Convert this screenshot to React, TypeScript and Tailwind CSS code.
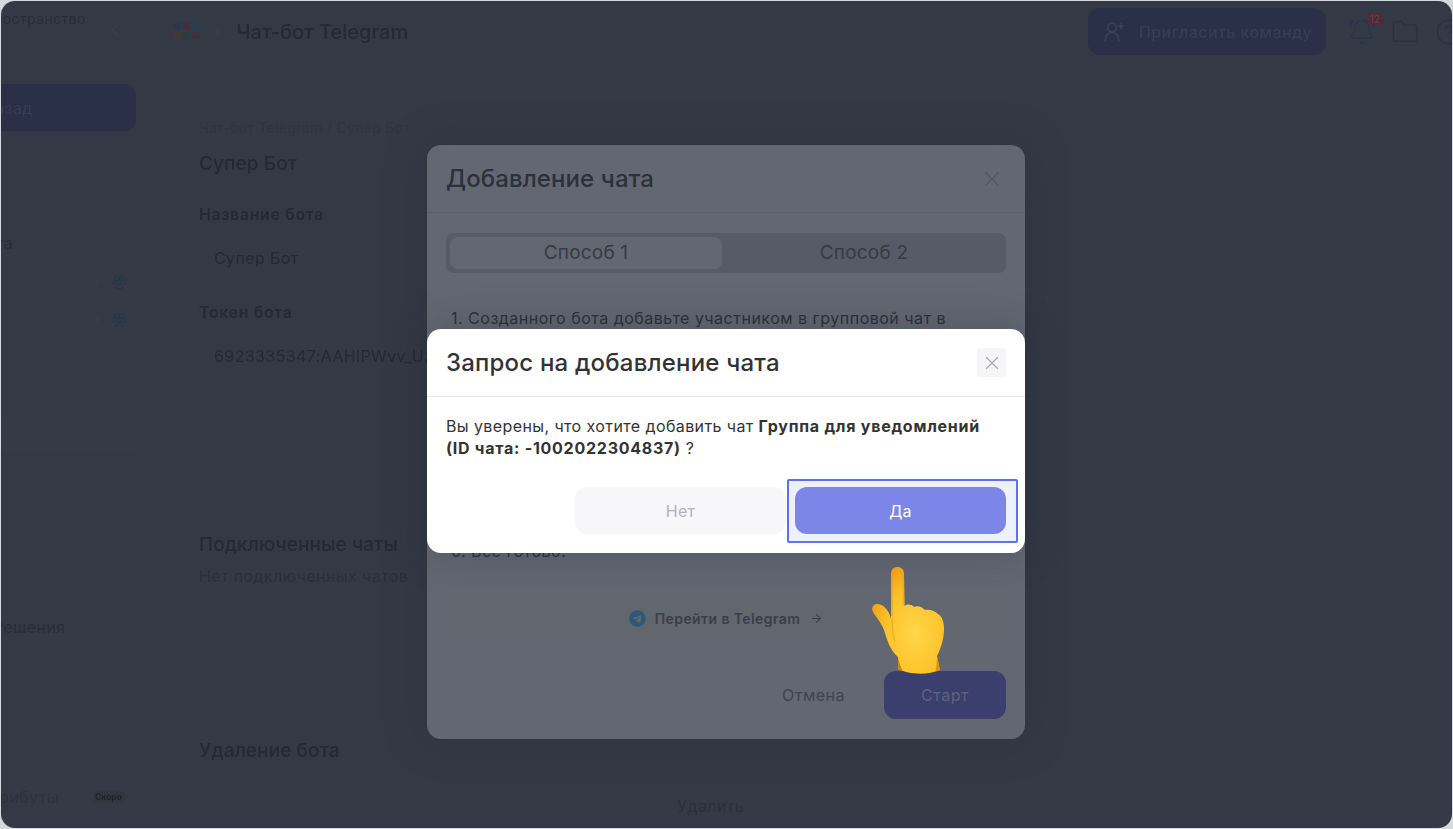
import { ArrowRight, BellRing, ChevronLeft, ChevronRight, CircleHelp, Folder, X } from 'lucide-react';
import { FaTelegram } from 'react-icons/fa';

function GroupIcon() {
  return (
    <svg width="14" height="14" viewBox="0 0 14 14" fill="none" stroke="#233649" strokeWidth="0.8">
      <circle cx="4.700" cy="3.200" r="2.300" />
      <circle cx="9.300" cy="3.200" r="2.300" />
      <circle cx="7" cy="7.300" r="2.300" />
      <path d="M3 5.300C1.400 6 .6 7.300.6 9h3M11 5.300c1.600.7 2.400 2 2.400 3.700h-3M3.400 13.400c0-2.400 1.500-3.700 3.600-3.700s3.600 1.300 3.600 3.700H3.400Z" />
    </svg>
  );
}

function InviteIcon() {
  return (
    <svg width="22" height="22" viewBox="0 0 22 22" fill="none" stroke="#3a4262" strokeWidth="1.6" strokeLinecap="round">
      <circle cx="9" cy="6.500" r="4.500" />
      <path d="M2 20c0-5 3-8.500 7-8.500s7 3.500 7 8.500" />
      <path d="M18 2.500v5M15.500 5h5" />
    </svg>
  );
}

function HandEmoji() {
  return (
    <svg className="absolute left-[870px] top-[565px]" width="76" height="110" viewBox="0 0 76 110">
      <defs>
        <radialGradient id="hand" cx="0.6" cy="0.62" r="0.68">
          <stop offset="0" stopColor="#ffd648" />
          <stop offset="0.6" stopColor="#fcc32a" />
          <stop offset="1" stopColor="#f19d10" />
        </radialGradient>
      </defs>
      <path
        d="M20 8C20 3 23 1 26.500 1C30 1 33 3 33 8L33.500 40C36 38 40 38 43 41C47 39 51 41 54 44C59 43 64 45 67 48C71 50 73 56 73 63C73 73 70 82 66 90L69 104C58 109 38 109 27 103L27 91C19 84 16 74 13 64C10 56 4 50 2 46C0 42 2 38 6 38C12 38 18 44 20 53Z"
        fill="url(#hand)"
      />
      <path d="M32 8L32.500 40M21 8L21 50" fill="none" stroke="#ef9f12" strokeWidth="2" opacity="0.55" />
      <path d="M21 52C21 62 22 69 24 76" fill="none" stroke="#eba015" strokeWidth="1.500" opacity="0.6" />
      <path d="M27 92C28.500 96 29 100 32 105C30 104.500 28.500 104 27 103Z" fill="#d9820a" />
      <path d="M66 90C66 95 65.500 100 64.500 105.500C66 105 67.500 104.700 69 104Z" fill="#e0910d" />
    </svg>
  );
}

function Sidebar() {
  return (
    <aside className="w-[198px] shrink-0 overflow-hidden text-[16px] tracking-[0.4px] text-[#292e39]">
      <div className="flex h-[83px] items-start">
        <span className="ml-[-81px] mt-[9px] whitespace-nowrap text-[14px] leading-[18px]">Рабочее пространство</span>
        <ChevronLeft size={22} strokeWidth={1.2} className="ml-[18px] mt-[18px] text-[#3a404c]" />
      </div>
      <div className="ml-[-30px] flex h-[47px] w-[165px] items-center rounded-xl bg-[#2a3048] pl-[12px] text-[#353c55]">
        Назад
      </div>
      <p className="ml-[-61px] mt-[102px] leading-5">Чат-бота</p>
      <div className="mt-[22px] flex w-[125px] items-center justify-end gap-[9px]">
        <ChevronRight size={12} className="text-[#3b4250]" />
        <GroupIcon />
      </div>
      <div className="mt-[24px] flex w-[125px] items-center justify-end gap-[9px]">
        <ChevronRight size={12} className="text-[#3b4250]" />
        <GroupIcon />
      </div>
      <div className="mt-[88px] h-[37px] w-[135px] rounded-r-md bg-[#353b46]" />
      <p className="ml-[-8px] mt-[165px] whitespace-nowrap leading-5">Решения</p>
      <div className="mt-[150px] flex items-center">
        <span className="ml-[-21px] leading-5 text-[#2d323d]">Атрибуты</span>
        <span className="ml-[34px] rounded bg-[#31363f] px-[2px] text-[8.5px] font-bold leading-[12px] tracking-normal text-[#1f232c]">Скоро</span>
      </div>
    </aside>
  );
}

function Page() {
  return (
    <div className="min-w-0 flex-1 text-[16px] tracking-[0.4px] text-[#242934]">
      <header className="flex h-[54px] items-center pt-[7px] tracking-normal">
        <div className="ml-[-26px] mt-[-2px] grid grid-cols-3 gap-[2px]">
          <i className="h-[7px] w-[7.500px] bg-[#2a384f]" />
          <i className="h-[7px] w-[7.500px] bg-[#402f3c]" />
          <i className="h-[7px] w-[7.500px] bg-[#293c50]" />
          <i className="h-[7px] w-[7.500px] bg-[#403a30]" />
          <i className="h-[7px] w-[7.500px] bg-[#283f40]" />
          <i className="h-[7px] w-[7.500px] bg-[#402f36]" />
        </div>
        <ChevronRight size={12} className="ml-[12px] text-[#3d4350]" />
        <h1 className="ml-[13px] text-[20px] font-medium leading-6">Чат-бот Telegram</h1>
        <button className="ml-auto flex h-[47px] w-[238px] shrink-0 items-center gap-[14px] rounded-xl bg-[#2a3048] pl-[15px] text-[16px] font-medium tracking-[0.4px] text-[#363d58]">
          <InviteIcon />
          Пригласить команду
        </button>
        <div className="relative ml-[22px] shrink-0">
          <BellRing size={28} strokeWidth={1.4} className="text-[#2a3350]" />
          <span className="absolute left-[19px] top-[-5px] h-[12px] w-[16px] rounded-[4px] bg-[#4f2c38] text-center text-[10px] leading-[12px] text-[#63404b]">12</span>
        </div>
        <Folder size={28} strokeWidth={1.3} className="ml-[15px] shrink-0 text-[#2a303c]" />
        <CircleHelp size={28} strokeWidth={1.3} className="ml-[16px] mr-[-11px] shrink-0 text-[#2a303c]" />
      </header>

      <main className="pt-[64px]">
        <p className="text-[14px] leading-[18px] tracking-[0.3px] text-[#2f3540]">Чат-бот Telegram / Супер Бот</p>
        <h2 className="mt-[15px] text-[19px] font-medium leading-6 tracking-[0.1px]">Супер Бот</h2>
        <h3 className="mt-[28px] font-semibold leading-5 tracking-[0.6px]">Название бота</h3>
        <p className="ml-[15px] mt-[24px] leading-5">Супер Бот</p>
        <h3 className="mt-[34px] font-semibold leading-5 tracking-[0.6px]">Токен бота</h3>
        <p className="ml-[15px] mt-[24px] whitespace-nowrap leading-5">6923335347:AAHlPWvv_Uz</p>
        <h2 className="mt-[167px] text-[19px] font-medium leading-6 tracking-[0.1px]">Подключенные чаты</h2>
        <p className="mt-[9px] leading-5 text-[#2b303b]">Нет подключенных чатов</p>
        <h2 className="mt-[153px] text-[19px] font-medium leading-6 tracking-[0.1px]">Удаление бота</h2>
        <p className="ml-[478px] mt-[33px] leading-5 text-[#2b303b]">Удалить</p>
      </main>
    </div>
  );
}

function AddChatModal() {
  return (
    <section className="absolute left-[426px] top-[144px] flex h-[594px] w-[598px] flex-col rounded-[14px] bg-[#636771] text-[#2c303a] shadow-[0_0_40px_rgba(36,42,58,0.4)]">
      <div className="flex h-[68px] items-center justify-between border-b border-[#5b5f6a] px-[19px]">
        <h2 className="text-[24px] font-medium tracking-[0.1px]">Добавление чата</h2>
        <div className="flex h-[29px] w-[29px] items-center justify-center">
          <X size={24} strokeWidth={1.2} className="text-[#53575f]" />
        </div>
      </div>
      <div className="mx-[19px] mt-[20px] flex h-[40px] rounded-lg bg-[#575b67] p-[4px] text-[19px] tracking-[0.2px] text-[#363a45]">
        <div className="flex w-[272px] items-center justify-center rounded-lg bg-[#636771] pt-[1px]">Способ 1</div>
        <div className="flex flex-1 items-center justify-center pl-[4px] pt-[1px]">Способ 2</div>
      </div>
      <p className="mx-[24px] mt-[34px] text-[16px] leading-[22px] tracking-[0.5px]">1. Созданного бота добавьте участником в групповой чат в</p>
      <p className="mx-[24px] mt-[211px] text-[16px] leading-[22px] tracking-[0.5px]">6. Всё готово!</p>
      <div className="mx-[19px] mt-[35px] flex h-[42px] items-center justify-center gap-[7px] rounded-lg bg-[#62666f] text-[14px] font-semibold tracking-[0.4px] text-[#3a3e49]">
        <FaTelegram size={17} className="text-[#2b5a78]" />
        <span className="ml-[2px]">Перейти в Telegram</span>
        <ArrowRight size={13} className="ml-[3px]" />
      </div>
      <div className="mx-[19px] mt-[32px] flex items-center justify-end text-[16px] tracking-[0.5px]">
        <span className="text-[#3f434e]">Отмена</span>
        <button className="ml-[39px] h-[48px] w-[122px] rounded-xl bg-[#3b3f6d] text-[#5f637d]">Старт</button>
      </div>
    </section>
  );
}

function ConfirmModal() {
  return (
    <section className="absolute left-[426px] top-[328px] h-[224px] w-[598px] rounded-[14px] bg-white text-[#333333] shadow-[0_0_40px_rgba(36,42,58,0.3)]">
      <div className="flex h-[68px] items-center justify-between border-b border-[#e9e9eb] px-[19px]">
        <h2 className="text-[24px] font-medium tracking-[0.2px]">Запрос на добавление чата</h2>
        <div className="flex h-[29px] w-[29px] items-center justify-center rounded bg-[#f6f6f8]">
          <X size={22} strokeWidth={1.2} className="text-[#a6a8ae]" />
        </div>
      </div>
      <p className="mx-[19px] mt-[18px] text-[16px] leading-[22px] tracking-[0.4px]">
        Вы уверены, что хотите добавить чат <b className="font-bold tracking-[0.75px]">Группа для уведомлений</b>
        <br />
        <b className="font-bold tracking-[0.75px]">(ID чата: -1002022304837)</b> ?
      </p>
      <div className="absolute left-[360px] top-[150px] h-[64px] w-[231px] rounded-[2px] border-2 border-[#5f6ff0] bg-[#eef0fc]" />
      <div className="absolute right-[19px] top-[158px] flex gap-[9px]">
        <button className="h-[47px] w-[211px] rounded-xl bg-[#f7f7f9] text-[16px] tracking-[0.3px] text-[#b0b2b9]">Нет</button>
        <button className="h-[47px] w-[211px] rounded-xl bg-[#7b86e8] text-[16px] tracking-[0.3px] text-white">Да</button>
      </div>
    </section>
  );
}

export default function App() {
  return (
    <div className="h-[829px] w-[1453px] overflow-hidden bg-[#d3d9de] font-['Inter','Noto_Sans',sans-serif]">
      <div className="relative ml-[1px] mt-[1px] h-[827px] w-[1451px] overflow-hidden rounded-[14px] bg-[#343a45]">
        <div className="flex h-full blur-[0.4px]">
          <Sidebar />
          <Page />
        </div>
        <AddChatModal />
        <ConfirmModal />
        <HandEmoji />
      </div>
    </div>
  );
}
